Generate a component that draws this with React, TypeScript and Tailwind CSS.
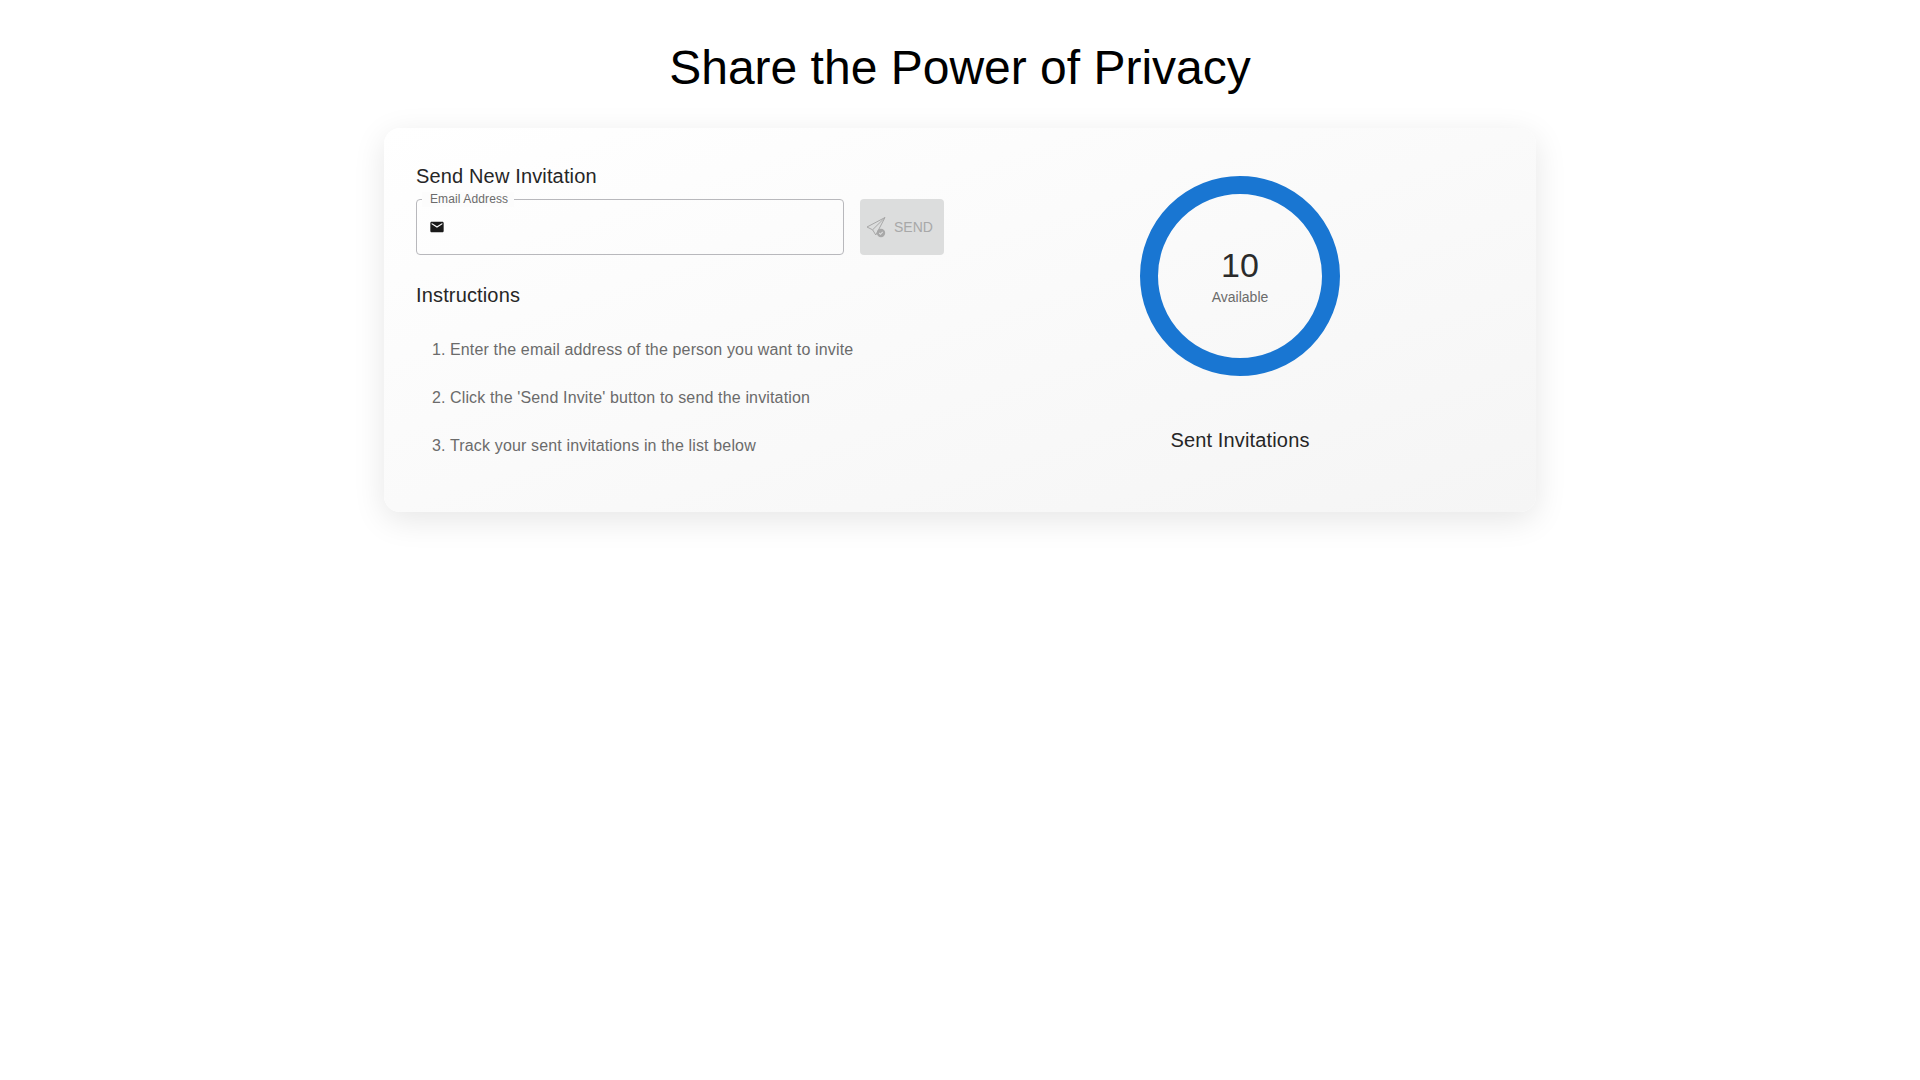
const font = "font-['Liberation_Sans',Arial,sans-serif]";

const steps = [
  'Enter the email address of the person you want to invite',
  "Click the 'Send Invite' button to send the invitation",
  'Track your sent invitations in the list below',
];

function MailIcon() {
  return (
    <svg viewBox="0 0 24 24" className="w-4 h-4 fill-[#1a1a1a] shrink-0">
      <path d="M20 4H4c-1.1 0-1.99.9-1.99 2L2 18c0 1.1.9 2 2 2h16c1.1 0 2-.9 2-2V6c0-1.1-.9-2-2-2zm0 4l-8 5-8-5V6l8 5 8-5v2z" />
    </svg>
  );
}

// outlined plane with a small check badge
function SendIcon() {
  return (
    <svg viewBox="0 0 22 22" className="w-[22px] h-[22px] shrink-0">
      <path d="M20 1.5 2 11l5.6 2.8 3.2 5.2L20 1.5zM20 1.5 7.6 13.8" fill="none" stroke="#a8a8a8" strokeWidth="1" strokeLinejoin="round" />
      <circle cx="16" cy="17" r="4.2" fill="#a8a8a8" />
      <path d="m14.2 17 1.3 1.3 2.2-2.4" fill="none" stroke="#dcdddd" strokeWidth="1.1" />
    </svg>
  );
}

export default function App() {
  return (
    <div className={`${font} min-h-screen bg-white opacity-[0.999]`}>
      <div className="max-w-[1152px] mx-auto pt-[33px]">
        <h1 className="text-[48px] leading-[70px] text-center text-black mb-[25px]">Share the Power of Privacy</h1>

        <div className="rounded-2xl bg-gradient-to-br from-white to-[#f5f5f5] shadow-[0_8px_32px_rgba(0,0,0,0.1)] p-8 grid grid-cols-2 gap-8 h-[384px]">
          <div>
            <h2 className="text-xl leading-8 tracking-[0.15px] text-[#262626]">Send New Invitation</h2>
            <div className="flex gap-4 mt-[7px]">
              <div className="relative flex-1 h-14 rounded border border-[#b8b8bc] flex items-center pl-[12px]">
                <span className="absolute -top-[8px] left-[5px] pl-2 pr-[6px] bg-[#fcfcfc] text-xs leading-[15px] tracking-[0.11px] text-[#6b6b6b]">Email Address</span>
                <MailIcon />
              </div>
              <button disabled className="w-[84px] h-14 rounded bg-[#dcdddd] text-[#a8a8a8] text-sm flex items-center gap-[7px] pl-[5px]">
                <SendIcon />
                <span>SEND</span>
              </button>
            </div>
            <h2 className="text-xl leading-8 tracking-[0.15px] text-[#262626] mt-[24px]">Instructions</h2>
            <ol className="mt-[15px] pl-4 flex flex-col text-base leading-6 text-[#6b6b6b] tracking-[0.15px]">
              {steps.map((s, i) => (
                <li key={s} className="h-12 flex items-center">
                  <span className="w-[18px]">{i + 1}.</span>
                  {s}
                </li>
              ))}
            </ol>
          </div>

          <div className="flex flex-col items-center pt-4">
            <div className="w-[200px] h-[200px] rounded-full border-[18px] border-[#1976d2] flex flex-col items-center justify-center pb-[1px]">
              <span className="text-[34px] leading-10 text-[#2b2b2b] mb-[2px]">10</span>
              <span className="text-sm leading-5 text-[#6b6b6b]">Available</span>
            </div>
            <h2 className="text-xl leading-8 tracking-[0.15px] text-[#262626] mt-[48px]">Sent Invitations</h2>
          </div>
        </div>
      </div>
    </div>
  );
}
